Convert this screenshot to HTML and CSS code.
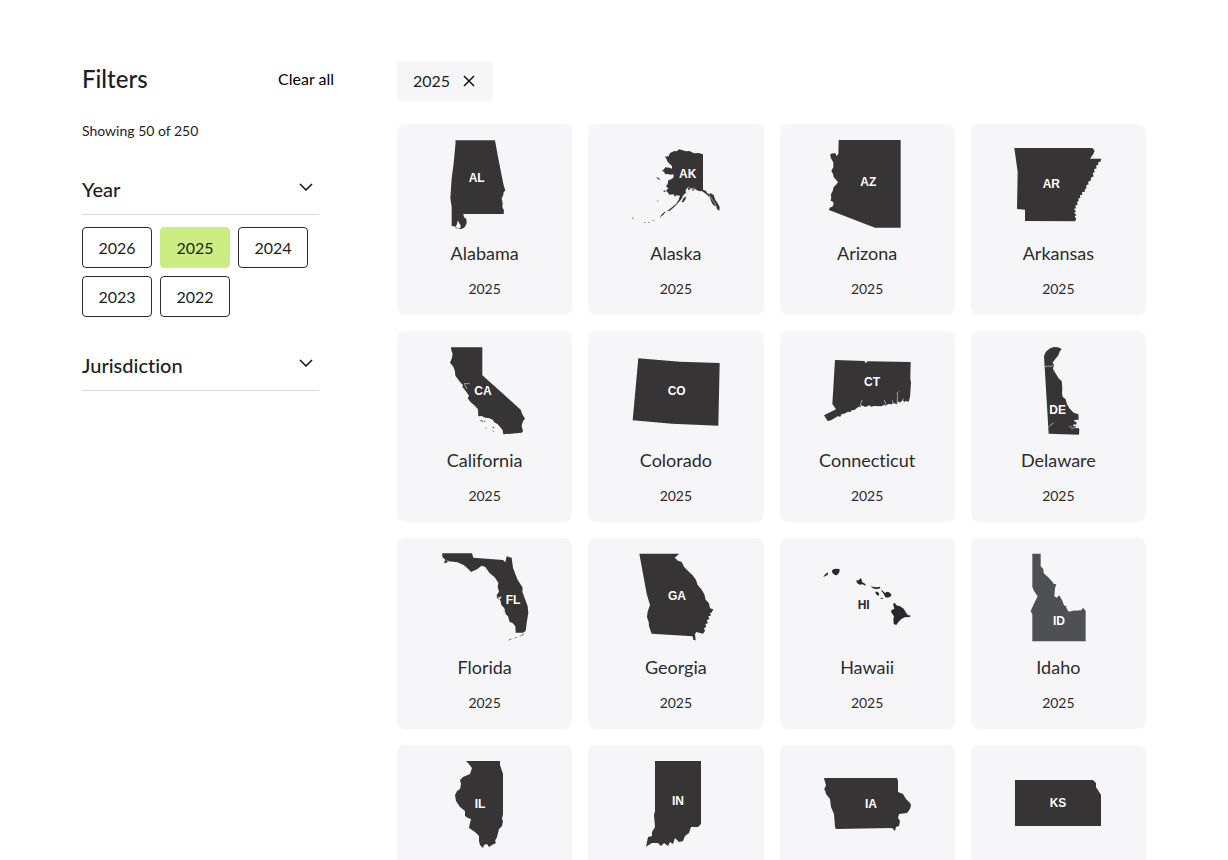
FILE: index.html
```html
<!DOCTYPE html>
<html lang="en">
<head>
<meta charset="utf-8">
<meta name="viewport" content="width=device-width, initial-scale=1">
<title>Filters</title>
<link rel="stylesheet" href="styles.css">
</head>
<body>
<div class="page">
  <aside class="filters">
    <header class="filters-head">
      <h2 class="filters-title">Filters</h2>
      <button class="clear" type="button">Clear all</button>
    </header>
    <p class="count">Showing 50 of 250</p>
    <section class="group">
      <h3 class="group-title">
        <button class="group-toggle" type="button" aria-expanded="true">Year
          <svg class="chevron" viewBox="0 0 14 8" aria-hidden="true"><path d="M1 1l6 6 6-6"/></svg>
        </button>
      </h3>
      <div class="options">
        <button class="option" type="button">2026</button>
        <button class="option selected" type="button" aria-pressed="true">2025</button>
        <button class="option" type="button">2024</button>
        <button class="option" type="button">2023</button>
        <button class="option" type="button">2022</button>
      </div>
    </section>
    <section class="group">
      <h3 class="group-title">
        <button class="group-toggle" type="button" aria-expanded="false">Jurisdiction
          <svg class="chevron" viewBox="0 0 14 8" aria-hidden="true"><path d="M1 1l6 6 6-6"/></svg>
        </button>
      </h3>
    </section>
  </aside>

  <main class="results">
    <button class="chip" type="button">2025
      <svg class="cross" viewBox="0 0 12 12" aria-hidden="true"><path d="M1 1l10 10M11 1L1 11"/></svg>
    </button>
    <div class="grid">
      <a class="card" href="#alabama">
        <svg class="state" viewBox="138 60 264 264" aria-hidden="true">
          <path d="M181 61H300L310 116 322 176 326 196 331 212 326 216 325 225 320 235 323 250 322 260 327 272 326 282H205L207 292 214 297 215 310 209 322 200 327 184 325 178 319 170 318 170 260 166 235 170 175 176 130 182 66Z"/>
          <path class="water" d="M189 301L192 309 197 316 196 324 187 325 181 319 185 315Z"/>
          <text class="abbr" x="245" y="187">AL</text>
        </svg>
        <span class="name">Alabama</span><span class="year">2025</span>
      </a>
      <a class="card" href="#alaska">
        <svg class="state" viewBox="36 30 264 264" aria-hidden="true">
          <path d="M249 73V179L258 183 262 190 268 192 272 190 281 195 285 208 293 220 299 231 298 242 291 238 287 229 279 224 274 215 269 202 258 192 247 184 235 183 225 177 216 184 218 173 206 181 203 175 210 169 202 173 196 182 199 187 190 196 184 208 174 219 163 231 153 239 146 244 142 242 157 231 168 222 176 209 180 197 169 196 165 200 160 193 148 194 143 187 138 182 145 175 138 169 143 162 145 151 155 147 161 142 160 133 151 134 143 132 135 133 133 126 126 122 132 118 136 112 148 113 156 116 156 108 147 100 142 94 138 84 134 80 146 79 150 69 163 63 170 64 178 58 188 61 198 64 208 63 222 70 236 69Z"/>
          <path d="M191 203l7-5-1 9-7 10-5-1zM137 246l-8 9-8 5 3-6 9-8zM108 142l8 1 5 7-6-2zM131 181l6 1-2 4-4-1zM119 261l4-2-2 4zM97 272l6-2-3 4zM84 277l6-1-4 3zM72 277l7 1-6 1zM37 262l4 3-4 1zM59 274l5 3zM105 178l2 3zM113 210l2 4-3 1z"/>
          <path class="inlet" d="M208 174l9 4 7-4M207 183l-7 12-7 8M267 194l8 13 9 11 7 18"/>
          <text class="abbr" x="203" y="143">AK</text>
        </svg>
        <span class="name">Alaska</span><span class="year">2025</span>
      </a>
      <a class="card" href="#arizona">
        <svg class="state" viewBox="24 30 264 264" aria-hidden="true">
          <path d="M71 30H257V293H180L42 240 44 233 52 230 56 222 54 215 47 212 49 200 47 195 53 183 56 171 63 164 69 157 64 150 56 142 54 132 49 122 55 112 55 97 47 83 46 72 55 70 61 70 65 78 70 72Z"/>
          <text class="abbr" x="160" y="167">AZ</text>
        </svg>
        <span class="name">Arizona</span><span class="year">2025</span>
      </a>
      <a class="card" href="#arkansas">
        <svg class="state" viewBox="28 30 264 264" aria-hidden="true">
          <path d="M29 54H263L270 62 266 72 256 86H290L288 94 280 98 281 104 274 107 276 115 268 118 270 126 264 130 267 139 259 143 258 152 250 155 252 163 245 166 245 175 240 179 241 185 232 186 233 195 226 195 227 204 221 205 222 214 217 215 219 225 212 226 214 235 208 236 214 245 208 248 215 254 210 260 215 266 211 274 61 273V239L37 237 39 126Z"/>
          <text class="abbr" x="140" y="175">AR</text>
        </svg>
        <span class="name">Arkansas</span><span class="year">2025</span>
      </a>
      <a class="card" href="#california">
        <svg class="state" viewBox="18 21 264 264" aria-hidden="true">
          <path d="M48 22H142V106L257 209 262 223 270 236 264 243 260 257 264 274 260 278 205 283 203 271 196 262 188 253 178 247 173 239 161 234 151 233 139 228 130 229 129 208 118 196 107 187 98 175 102 168 97 160 88 148 82 141 84 135 75 126 61 107 60 94 55 80 45 68 50 56 53 42 49 31Z"/>
          <path class="inlet" d="M87 131h17M89 132l6 15"/>
          <path d="M133 241l11 1-2 4zM146 242l6 1-3 3zM151 263l4 1-2 3zM172 259l7 4-4 2zM172 271l6 6-4-2z"/>
          <text class="abbr" x="144" y="164">CA</text>
        </svg>
        <span class="name">California</span><span class="year">2025</span>
      </a>
      <a class="card" href="#colorado">
        <svg class="state" viewBox="591 21 264 264" aria-hidden="true">
          <path d="M610 55L735 65 854 69 850 257 711 251 593 241Z"/>
          <text class="abbr" x="725" y="166">CO</text>
        </svg>
        <span class="name">Colorado</span><span class="year">2025</span>
      </a>
      <a class="card" href="#connecticut">
        <svg class="state" viewBox="24 21 264 264" aria-hidden="true">
          <path d="M60 60L149 63 151 70 158 64 287 66 286 115 288 129 285 171 281 185 273 183 268 186 262 181 255 188 250 184 245 193 236 189 230 193 220 192 212 197 207 194 200 199 177 198 168 200 163 196 151 201 140 196 136 202 130 201 118 210 110 211 106 217 99 215 88 221 80 222 76 230 68 229 48 241 38 243 27 226 63 208 52 192Z"/>
          <path class="inlet" d="M134 202l7-22M208 180l5 15M246 189l2-21-2-8 6-6M232 181l2 10M265 176l-1 8"/>
          <text class="abbr" x="171" y="138">CT</text>
        </svg>
        <span class="name">Connecticut</span><span class="year">2025</span>
      </a>
      <a class="card" href="#delaware">
        <svg class="state" viewBox="598 21 264 264" aria-hidden="true">
          <path d="M688 48L693 36 704 26 717 21 730 22 741 27 735 35 731 46 722 57 713 69 718 73 715 87 722 99 733 116 741 123 743 146 742 160 744 170 753 178 757 193 764 205 777 218 791 223 792 240 789 260 794 268 793 284 702 281Z"/>
          <path class="inlet" d="M691 80l10-2 8 2 7-5M702 262l7-8 8-5M763 261l10-1M770 266l20-6"/>
          <path class="water" d="M793 239l-15 1 1 4 6 2 1 7-11 1 0 3 11 3-4 4 7 1 4-6z"/>
          <text class="abbr" x="729" y="221">DE</text>
        </svg>
        <span class="name">Delaware</span><span class="year">2025</span>
      </a>
      <a class="card" href="#florida">
        <svg class="state" viewBox="18 27 264 264" aria-hidden="true">
          <path d="M22 25H111L115 38 204 45 211 52 215 34 230 38 234 68 247 103 263 128 262 140 278 184 280 203 275 234 272 258 264 263 242 263 241 244 232 233 224 231 219 214 211 206 208 190 199 180 196 166 186 160 185 150 192 140 188 126 190 113 179 97 163 83 151 66 140 62 126 73 108 81 99 71 86 60 67 52 41 49 34 54 26 53 32 45 22 36Z"/>
          <path class="water" d="M187 153l5 5 8-5-2 6-6 6-2-5z"/>
          <path class="inlet" d="M36 52l3-7M207 192l3 15M203 196l10 8"/>
          <path d="M269 263l-6 8-12 5 10-7zM248 276l-14 5 9-5zM232 281l-13 6 6-5z"/>
          <text class="abbr" x="234" y="178">FL</text>
        </svg>
        <span class="name">Florida</span><span class="year">2025</span>
      </a>
      <a class="card" href="#georgia">
        <svg class="state" viewBox="591 27 264 264" aria-hidden="true">
          <path d="M613 26H733L719 38 729 47 740 51 748 67 763 82 773 91 783 105 788 120 800 134 808 148 812 164 822 175 825 190 835 193 829 204 825 203 828 212 820 213 823 222 815 226 819 235 811 237 814 246 807 249 810 258 804 266 784 261 780 267 782 286 775 285 773 274 650 266 642 244 641 231 636 216 638 200 645 180 635 146Z"/>
          <text class="abbr" x="726" y="165">GA</text>
        </svg>
        <span class="name">Georgia</span><span class="year">2025</span>
      </a>
      <a class="card" href="#hawaii">
        <svg class="state" viewBox="24 27 264 264" aria-hidden="true">
          <path class="isle" d="M25 96l6-9 9-5-2 8zM51 76l8-5 15 1-1 10-7 9-6-1-8-6zM124 106l8 0 3-6 5 3 1 8 10 6 1 6-9-5-9 1-8-5zM166 124l12 2 8 1 9-2 1 5-9 2-10-1zM180 140l8 0 5 7-2 5-6-2zM197 135l6 2 7 7 6-4 6 2 7 6-1 6-10 4-8-2-3-8zM197 158l8 1-3 3-5-1zM234 176l6-2 4 7 11 3 11 7 6 10 5 8 10 3-3 4-15 1-10 5-9 9-6 9-8-3-1-14 2-9-9-13 2-6 8-4z"/>
          <text class="abbr dark" x="146" y="192">HI</text>
        </svg>
        <span class="name">Hawaii</span><span class="year">2025</span>
      </a>
      <a class="card" href="#idaho">
        <svg class="state light" viewBox="598 27 264 264" aria-hidden="true">
          <path d="M653 26H678V64L686 72 687 85 700 96 711 108 718 117 725 118 721 130 719 154 726 158 734 151 743 167 748 181 754 184 758 195 763 200 775 197 800 196 805 188 813 198V289H653V207L648 199 656 180 669 154 658 138 653 126Z"/>
          <text class="abbr" x="733" y="240">ID</text>
        </svg>
        <span class="name">Idaho</span><span class="year">2025</span>
      </a>
      <a class="card" href="#illinois">
        <svg class="state" viewBox="0 0 88 88" aria-hidden="true">
          <path d="M25 0H59L59 4 62 13V53L61 58 62 60 61 65 58 68 56 76 54 80 55 82 51 84 48 86 46 83 43 84 42 87 39 84 38 80 38 75 34 71 28 67 29 62 30 58 27 57 24 55 24 50 19 46 15 40 14 34 16 30 19 28 20 23 19 19 22 16 29 13 31 7 27 2Z"/>
          <text class="abbr small" x="39" y="47">IL</text>
        </svg>
        <span class="name">Illinois</span><span class="year">2025</span>
      </a>
      <a class="card" href="#indiana">
        <svg class="state" viewBox="0 0 88 88" aria-hidden="true">
          <path d="M23 0H69V63L66 66 59 66 57 72 53 75 51 80 47 81 43 77 41 83 38 81 36 85 32 82 29 85 26 82 20 82 15 85 14 86 16 76 20 75 20 71 23 66 22 54 23 50Z"/>
          <text class="abbr small" x="46" y="44">IN</text>
        </svg>
        <span class="name">Indiana</span><span class="year">2025</span>
      </a>
      <a class="card" href="#iowa">
        <svg class="state" viewBox="0 0 88 88" aria-hidden="true">
          <path d="M1 17H74L75 20 75 31 80 33 83 38 87 42 88 44 87 48 84 52 76 53 75 57 77 60 76 65 73 66 72 70 70 68 69 67 13 68 12 66 11 53 8 46 7 38 3 33 2 29 1 29 3 24 2 21Z"/>
          <text class="abbr small" x="48" y="47">IA</text>
        </svg>
        <span class="name">Iowa</span><span class="year">2025</span>
      </a>
      <a class="card" href="#kansas">
        <svg class="state" viewBox="0 0 88 88" aria-hidden="true">
          <path d="M1 19H79L82 22 82 26 87 34V65H1Z"/>
          <text class="abbr small" x="44" y="46">KS</text>
        </svg>
        <span class="name">Kansas</span><span class="year">2025</span>
      </a>
    </div>
  </main>
</div>
</body>
</html>
```
FILE: styles.css
```css
* { box-sizing: border-box; }

body {
  margin: 0;
  background: #fff;
  color: #1c1e24;
  font-family: Lato, "Liberation Sans", sans-serif;
  font-size: 16px;
  line-height: 24px;
  font-variant-ligatures: none;
}

button {
  margin: 0;
  padding: 0;
  border: 0;
  background: none;
  color: inherit;
  font: inherit;
  font-variant-ligatures: none;
  cursor: pointer;
}

svg { display: block; flex: none; }

.page {
  display: grid;
  grid-template-columns: 252px minmax(0, 1fr);
  gap: 63px;
  padding: 61px 82px 40px;
}

.filters-head {
  display: flex;
  align-items: center;
  justify-content: space-between;
  height: 36px;
}
.filters-title { margin: 0; font-size: 24px; font-weight: 500; }
.clear { color: #000; }
.count { margin: 24px 0 0; font-size: 14px; line-height: 20px; }

.group { width: 237px; margin-top: 32px; }
.group-title { margin: 0; font-size: 20px; font-weight: 500; }
.group-toggle {
  display: flex;
  align-items: center;
  justify-content: space-between;
  width: 100%;
  height: 42px;
  padding: 0 6px 10px 0;
  border-bottom: 1px solid #d9d9db;
}
.chevron { width: 14px; height: 8px; margin-bottom: 4px; }
.chevron, .cross { fill: none; stroke: #111; stroke-width: 1.5; }

.options { display: flex; flex-wrap: wrap; gap: 8px; padding-top: 12px; }
.option {
  width: 70px;
  height: 41px;
  border: 1px solid #2b2c33;
  border-radius: 4px;
}
.option.selected { border-color: #cbee82; background: #cbee82; }

.chip {
  display: flex;
  align-items: center;
  gap: 13px;
  height: 40px;
  padding: 0 18px 0 16px;
  border-radius: 4px;
  background: #f6f6f9;
}
.cross { width: 12px; height: 12px; }

.grid {
  display: grid;
  grid-template-columns: repeat(4, minmax(0, 1fr));
  gap: 16px;
  margin-top: 23px;
}
.card {
  display: flex;
  flex-direction: column;
  align-items: center;
  padding: 16px;
  border-radius: 8px;
  background: #f6f6f9;
  color: #2b2b2e;
  text-decoration: none;
}
.name { margin-top: 13px; font-size: 18px; }
.year { margin-top: 14px; font-size: 14px; line-height: 20px; }

.state { width: 88px; height: 88px; overflow: visible; fill: #373435; }
.state.light { fill: #4f5053; }
.state .water { fill: #f6f6f9; }
.state .inlet { fill: none; stroke: #d5d5d8; stroke-width: 2; }
.state .isle { fill: #2b2829; }
.abbr {
  fill: #fff;
  font-family: "Liberation Sans", Arial, sans-serif;
  font-size: 36px;
  font-weight: 700;
  text-anchor: middle;
}
.abbr.small { font-size: 12px; }
.state .dark { fill: #2b2829; }
```
